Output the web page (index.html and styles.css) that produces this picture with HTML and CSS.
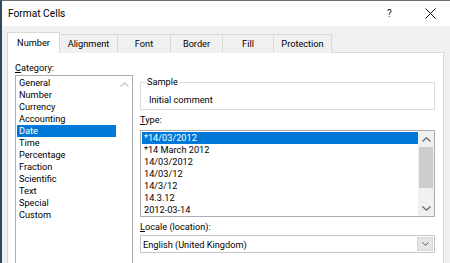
FILE: index.html
```html
<!DOCTYPE html>
<html lang="en">
<head>
  <meta charset="UTF-8">
  <title>Format Cells</title>
  <link rel="stylesheet" href="styles.css">
</head>
<body>
  <div class="window">
    <div class="titlebar">
      <span class="title">Format Cells</span>
      <span class="help">?</span>
      <span class="close">
        <svg width="11" height="11" viewBox="0 0 11 11"><path d="M0.5 0.5L10.5 10.5M10.5 0.5L0.5 10.5" stroke="#111" stroke-width="1" fill="none"/></svg>
      </span>
    </div>
    <div class="dialog">
      <ul class="tabs">
        <li class="tab tab-number active">Number</li>
        <li class="tab tab-alignment">Alignment</li>
        <li class="tab tab-font">Font</li>
        <li class="tab tab-border">Border</li>
        <li class="tab tab-fill">Fill</li>
        <li class="tab tab-protection">Protection</li>
      </ul>
      <div class="panel">
        <div class="col-left">
          <div class="label"><u>C</u>ategory:</div>
          <div class="listbox category">
            <ul class="items">
              <li>General</li>
              <li>Number</li>
              <li>Currency</li>
              <li>Accounting</li>
              <li class="selected">Date</li>
              <li>Time</li>
              <li>Percentage</li>
              <li>Fraction</li>
              <li>Scientific</li>
              <li>Text</li>
              <li>Special</li>
              <li>Custom</li>
            </ul>
            <div class="scrollbar disabled">
              <span class="arrow">
                <svg width="9" height="5" viewBox="0 0 9 5"><path d="M0.5 4.5L4.5 0.8L8.5 4.5" stroke="#c4c4c4" stroke-width="1.2" fill="none"/></svg>
              </span>
            </div>
          </div>
        </div>
        <div class="col-right">
          <fieldset class="sample">
            <legend>Sample</legend>
            <div class="sample-text">Initial comment</div>
          </fieldset>
          <div class="label label-type"><u>T</u>ype:</div>
          <div class="listbox type">
            <ul class="items">
              <li class="selected">*14/03/2012</li>
              <li>*14 March 2012</li>
              <li>14/03/2012</li>
              <li>14/03/12</li>
              <li>14/3/12</li>
              <li>14.3.12</li>
              <li>2012-03-14</li>
            </ul>
            <div class="scrollbar">
              <span class="arrow">
                <svg width="9" height="5" viewBox="0 0 9 5"><path d="M0.5 4.5L4.5 0.8L8.5 4.5" stroke="#606060" stroke-width="1.2" fill="none"/></svg>
              </span>
              <span class="thumb"></span>
              <span class="track"></span>
              <span class="arrow">
                <svg width="9" height="5" viewBox="0 0 9 5"><path d="M0.5 0.5L4.5 4.2L8.5 0.5" stroke="#606060" stroke-width="1.2" fill="none"/></svg>
              </span>
            </div>
          </div>
          <div class="label label-locale"><u>L</u>ocale (location):</div>
          <div class="combo">
            <span class="combo-text">English (United Kingdom)</span>
            <span class="drop">
              <svg width="7" height="4" viewBox="0 0 7 4"><path d="M0.5 0.5L3.5 3.3L6.5 0.5" stroke="#555" stroke-width="1" fill="none"/></svg>
            </span>
          </div>
        </div>
      </div>
    </div>
  </div>
</body>
</html>
```

FILE: styles.css
```css
* {
  margin: 0;
  padding: 0;
  box-sizing: border-box;
}
body {
  width: 450px;
  height: 263px;
  overflow: hidden;
  font-family: Roboto, "Liberation Sans", sans-serif;
  font-size: 9.2px;
  color: #000;
  background: #f0f0f0;
}
ul {
  list-style-type: none;
}
u {
  text-decoration-thickness: 1px;
  text-underline-offset: 1px;
}
.window {
  height: 263px;
  overflow: hidden;
  border-top: 1px solid #6d6d6d;
  border-left: 2px solid #34465a;
  background: #f0f0f0;
}
.titlebar {
  height: 25px;
  background: #fff;
  display: flex;
  align-items: center;
  padding-left: 6px;
}
.title {
  flex: 1;
  font-size: 10.2px;
}
.help {
  width: 10px;
  margin-right: 28px;
  font-size: 10px;
  color: #222;
}
.close {
  display: flex;
  margin-right: 14px;
}
.dialog {
  padding: 6px 6px 0 5px;
}
.tabs {
  display: flex;
  align-items: flex-end;
  height: 21px;
  margin-bottom: -1px;
}
.tab {
  height: 19px;
  line-height: 18px;
  text-align: center;
  border: 1px solid #d9d9d9;
  border-left: none;
  border-bottom: none;
  background: #f0f0f0;
}
.tab.active {
  position: relative;
  height: 21px;
  line-height: 20px;
  background: #fff;
  border-left: 1px solid #d9d9d9;
}
.tab-number { width: 53px; }
.tab-alignment { width: 58px; }
.tab-font { width: 53px; }
.tab-border { width: 52px; }
.tab-fill { width: 51px; }
.tab-protection { width: 58px; }
.panel {
  display: grid;
  grid-template-columns: 118px 295px;
  column-gap: 7px;
  align-items: start;
  height: 260px;
  padding: 8px 8px 0 7px;
  background: #fff;
  border: 1px solid #d9d9d9;
}
.label {
  height: 14px;
  line-height: 14px;
}
.listbox {
  display: flex;
  border: 1px solid #abadb3;
  background: #fff;
}
.listbox .items {
  flex: 1;
  padding: 1px 0 0 1px;
}
.listbox .items li {
  height: 12px;
  line-height: 12px;
  padding-left: 2px;
  white-space: nowrap;
}
.listbox .items li.selected {
  background: #0078d7;
  color: #fff;
}
.category {
  height: 200px;
}
.scrollbar {
  width: 16px;
  display: flex;
  flex-direction: column;
  background: #f0f0f0;
}
.scrollbar.disabled {
  background: #fff;
}
.scrollbar .arrow {
  height: 16px;
  display: flex;
  align-items: center;
  justify-content: center;
}
.scrollbar .thumb {
  height: 41px;
  margin: 0 1px;
  background: #cdcdcd;
}
.scrollbar .track {
  flex: 1;
}
.col-right {
  padding-top: 14px;
}
.sample {
  height: 35px;
  border: 1px solid #dcdcdc;
  padding: 4px 0 0 8px;
}
.sample legend {
  line-height: 14px;
  padding: 0 1px;
  margin-left: -3px;
}
.sample-text {
  line-height: 14px;
}
.label-type {
  margin-top: 3px;
}
.type {
  height: 87px;
  margin-top: 3px;
}
.label-locale {
  margin-top: 3px;
}
.combo {
  display: flex;
  align-items: center;
  height: 18px;
  margin-top: 1px;
  border: 1px solid #c6c6c6;
  padding: 0 0 0 2px;
}
.combo-text {
  flex: 1;
}
.drop {
  width: 16px;
  height: 14px;
  margin-right: 1px;
  display: flex;
  align-items: center;
  justify-content: center;
  background: #e5e5e5;
  border: 1px solid #d4d4d4;
}
```
